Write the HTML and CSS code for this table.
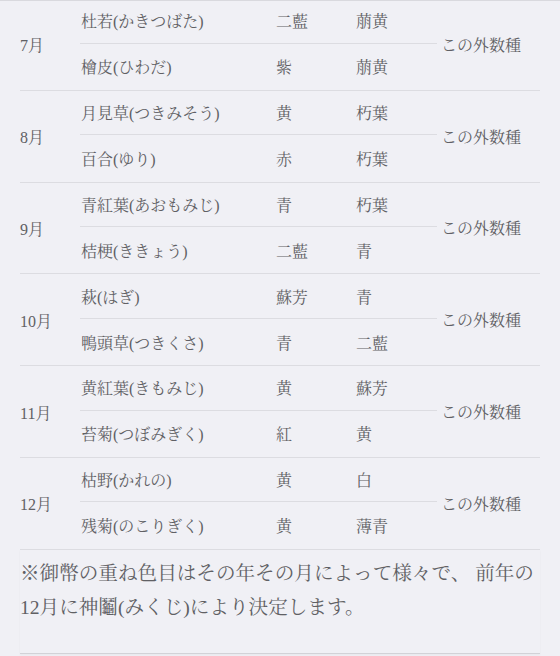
FILE: index.html
```html
<!DOCTYPE html>
<html lang="ja">
<head>
<meta charset="utf-8">
<title>御幣の重ね色目</title>
<link rel="stylesheet" href="styles.css">
</head>
<body>
<div class="page">
  <div class="table">
    <div class="block">
      <div class="mon">7月</div>
      <div class="cell r1 name">杜若(かきつばた)</div>
      <div class="cell r1 c1">二藍</div>
      <div class="cell r1 c2">萠黄</div>
      <div class="other">この外数種</div>
      <div class="cell r2 name">檜皮(ひわだ)</div>
      <div class="cell r2 c1">紫</div>
      <div class="cell r2 c2">萠黄</div>
    </div>
    <div class="block">
      <div class="mon">8月</div>
      <div class="cell r1 name">月見草(つきみそう)</div>
      <div class="cell r1 c1">黄</div>
      <div class="cell r1 c2">朽葉</div>
      <div class="other">この外数種</div>
      <div class="cell r2 name">百合(ゆり)</div>
      <div class="cell r2 c1">赤</div>
      <div class="cell r2 c2">朽葉</div>
    </div>
    <div class="block">
      <div class="mon">9月</div>
      <div class="cell r1 name">青紅葉(あおもみじ)</div>
      <div class="cell r1 c1">青</div>
      <div class="cell r1 c2">朽葉</div>
      <div class="other">この外数種</div>
      <div class="cell r2 name">桔梗(ききょう)</div>
      <div class="cell r2 c1">二藍</div>
      <div class="cell r2 c2">青</div>
    </div>
    <div class="block">
      <div class="mon">10月</div>
      <div class="cell r1 name">萩(はぎ)</div>
      <div class="cell r1 c1">蘇芳</div>
      <div class="cell r1 c2">青</div>
      <div class="other">この外数種</div>
      <div class="cell r2 name">鴨頭草(つきくさ)</div>
      <div class="cell r2 c1">青</div>
      <div class="cell r2 c2">二藍</div>
    </div>
    <div class="block">
      <div class="mon">11月</div>
      <div class="cell r1 name">黄紅葉(きもみじ)</div>
      <div class="cell r1 c1">黄</div>
      <div class="cell r1 c2">蘇芳</div>
      <div class="other">この外数種</div>
      <div class="cell r2 name">苔菊(つぼみぎく)</div>
      <div class="cell r2 c1">紅</div>
      <div class="cell r2 c2">黄</div>
    </div>
    <div class="block">
      <div class="mon">12月</div>
      <div class="cell r1 name">枯野(かれの)</div>
      <div class="cell r1 c1">黄</div>
      <div class="cell r1 c2">白</div>
      <div class="other">この外数種</div>
      <div class="cell r2 name">残菊(のこりぎく)</div>
      <div class="cell r2 c1">黄</div>
      <div class="cell r2 c2">薄青</div>
    </div>
  </div>
  <p class="note">※御幣の重ね色目はその年その月によって様々で、 前年の<span class="nw">12月に</span>神鬮(みくじ)により決定します。</p>
</div>
</body>
</html>
```
FILE: styles.css
```css
html, body {
  margin: 0;
  padding: 0;
  background: #f0f0f5;
}
body {
  font-family: "Liberation Serif", "Noto Serif CJK JP", "Noto Sans CJK JP", serif;
  color: #606064;
  width: 560px;
  height: 656px;
  overflow: hidden;
}
.page {
  border-top: 1px solid #d9d9de;
  padding: 0 20px;
}
.table {
  margin-top: -2px;
}
.block {
  display: grid;
  grid-template-columns: 60px 196px 80px 81px 103px;
  grid-template-rows: 44.5px 46.3px;
  border-bottom: 1px solid #dcdce1;
  font-size: 16px;
}
.mon {
  grid-row: span 2;
  display: flex;
  align-items: center;
  padding-top: 1px;
}
.other {
  grid-column: 5;
  grid-row: span 2;
  display: flex;
  align-items: center;
  padding-left: 4px;
}
.cell {
  display: flex;
  align-items: center;
  box-sizing: border-box;
}
.r1 {
  border-bottom: 1px solid #dcdce1;
}
.name {
  padding-left: 1px;
}
.note {
  margin: 0;
  padding: 7px 0 28px;
  font-size: 19.6px;
  line-height: 34px;
  border-bottom: 1px solid #d2d2d7;
  box-shadow: 0 1px 2px rgba(0, 0, 0, 0.04);
}
.nw {
  white-space: nowrap;
}
```
